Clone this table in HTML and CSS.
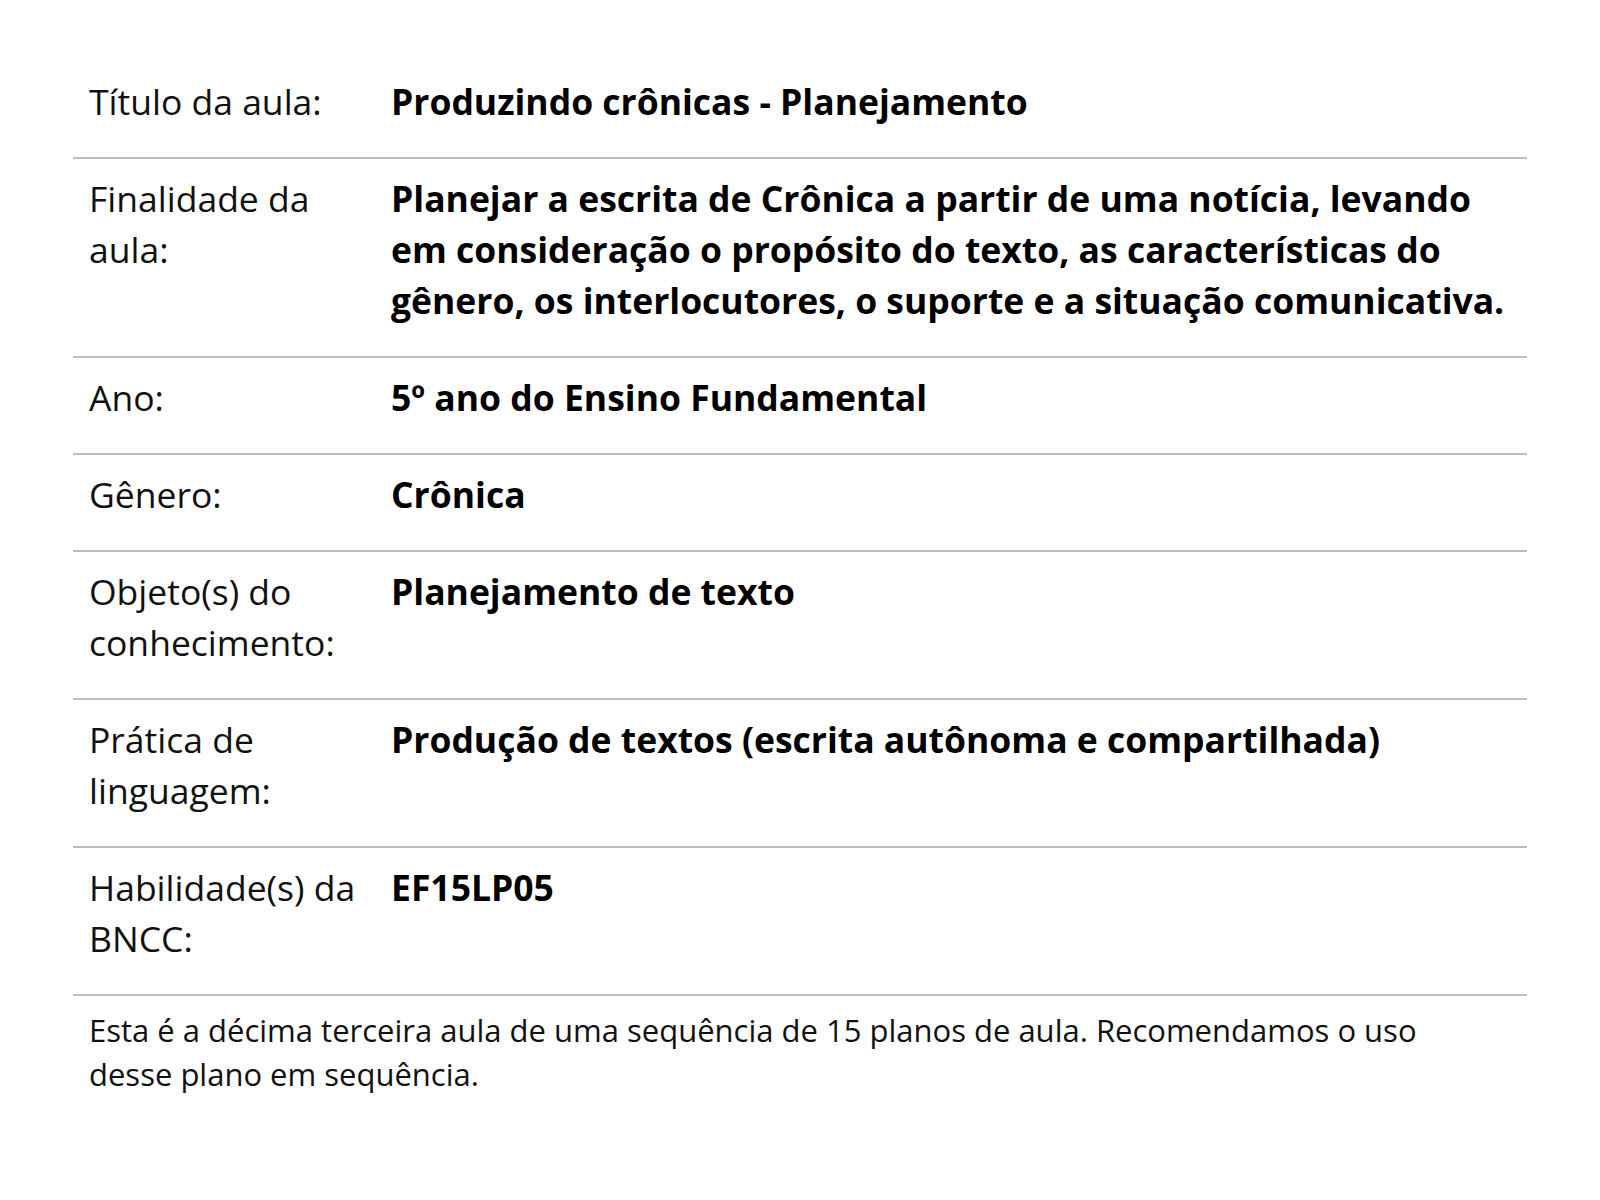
FILE: index.html
```html
<!DOCTYPE html>
<html lang="pt-BR">
<head>
<meta charset="utf-8">
<title>Plano de aula</title>
<link rel="stylesheet" href="styles.css">
</head>
<body>
<main class="page">
  <div class="info">
    <div class="row">
      <div class="label">Título da aula:</div>
      <div class="value">Produzindo crônicas - Planejamento</div>
    </div>
    <div class="row">
      <div class="label">Finalidade da aula:</div>
      <div class="value">Planejar a escrita de Crônica a partir de uma notícia, levando em consideração o propósito do texto, as características do gênero, os interlocutores, o suporte e a situação comunicativa.</div>
    </div>
    <div class="row">
      <div class="label">Ano:</div>
      <div class="value">5º ano do Ensino Fundamental</div>
    </div>
    <div class="row">
      <div class="label">Gênero:</div>
      <div class="value">Crônica</div>
    </div>
    <div class="row">
      <div class="label">Objeto(s) do conhecimento:</div>
      <div class="value">Planejamento de texto</div>
    </div>
    <div class="row">
      <div class="label">Prática de linguagem:</div>
      <div class="value">Produção de textos (escrita autônoma e compartilhada)</div>
    </div>
    <div class="row">
      <div class="label">Habilidade(s) da BNCC:</div>
      <div class="value">EF15LP05</div>
    </div>
  </div>
  <p class="note">Esta é a décima terceira aula de uma sequência de 15 planos de aula. Recomendamos o uso desse plano em sequência.</p>
</main>
</body>
</html>
```

FILE: styles.css
```css
html, body {
  margin: 0;
  padding: 0;
  background: #ffffff;
}

body {
  font-family: "Open Sans", "Noto Sans", sans-serif;
  color: #111111;
}

.page {
  padding: 62px 73px 40px 73px;
}

.info {
  display: flex;
  flex-direction: column;
}

.row {
  display: grid;
  grid-template-columns: 302px 1fr;
  padding: 14px 0 30px 0;
  border-bottom: 2px solid #bdbdbd;
  font-size: 35.5px;
  line-height: 51px;
}

.label {
  padding: 0 16px;
  font-weight: 400;
  color: #111111;
}

.value {
  padding: 0 8px 0 16px;
  font-weight: 700;
  color: #000000;
}

.note {
  margin: 0;
  padding: 12px 40px 0 16px;
  font-size: 31px;
  line-height: 44px;
  color: #111111;
}
```
